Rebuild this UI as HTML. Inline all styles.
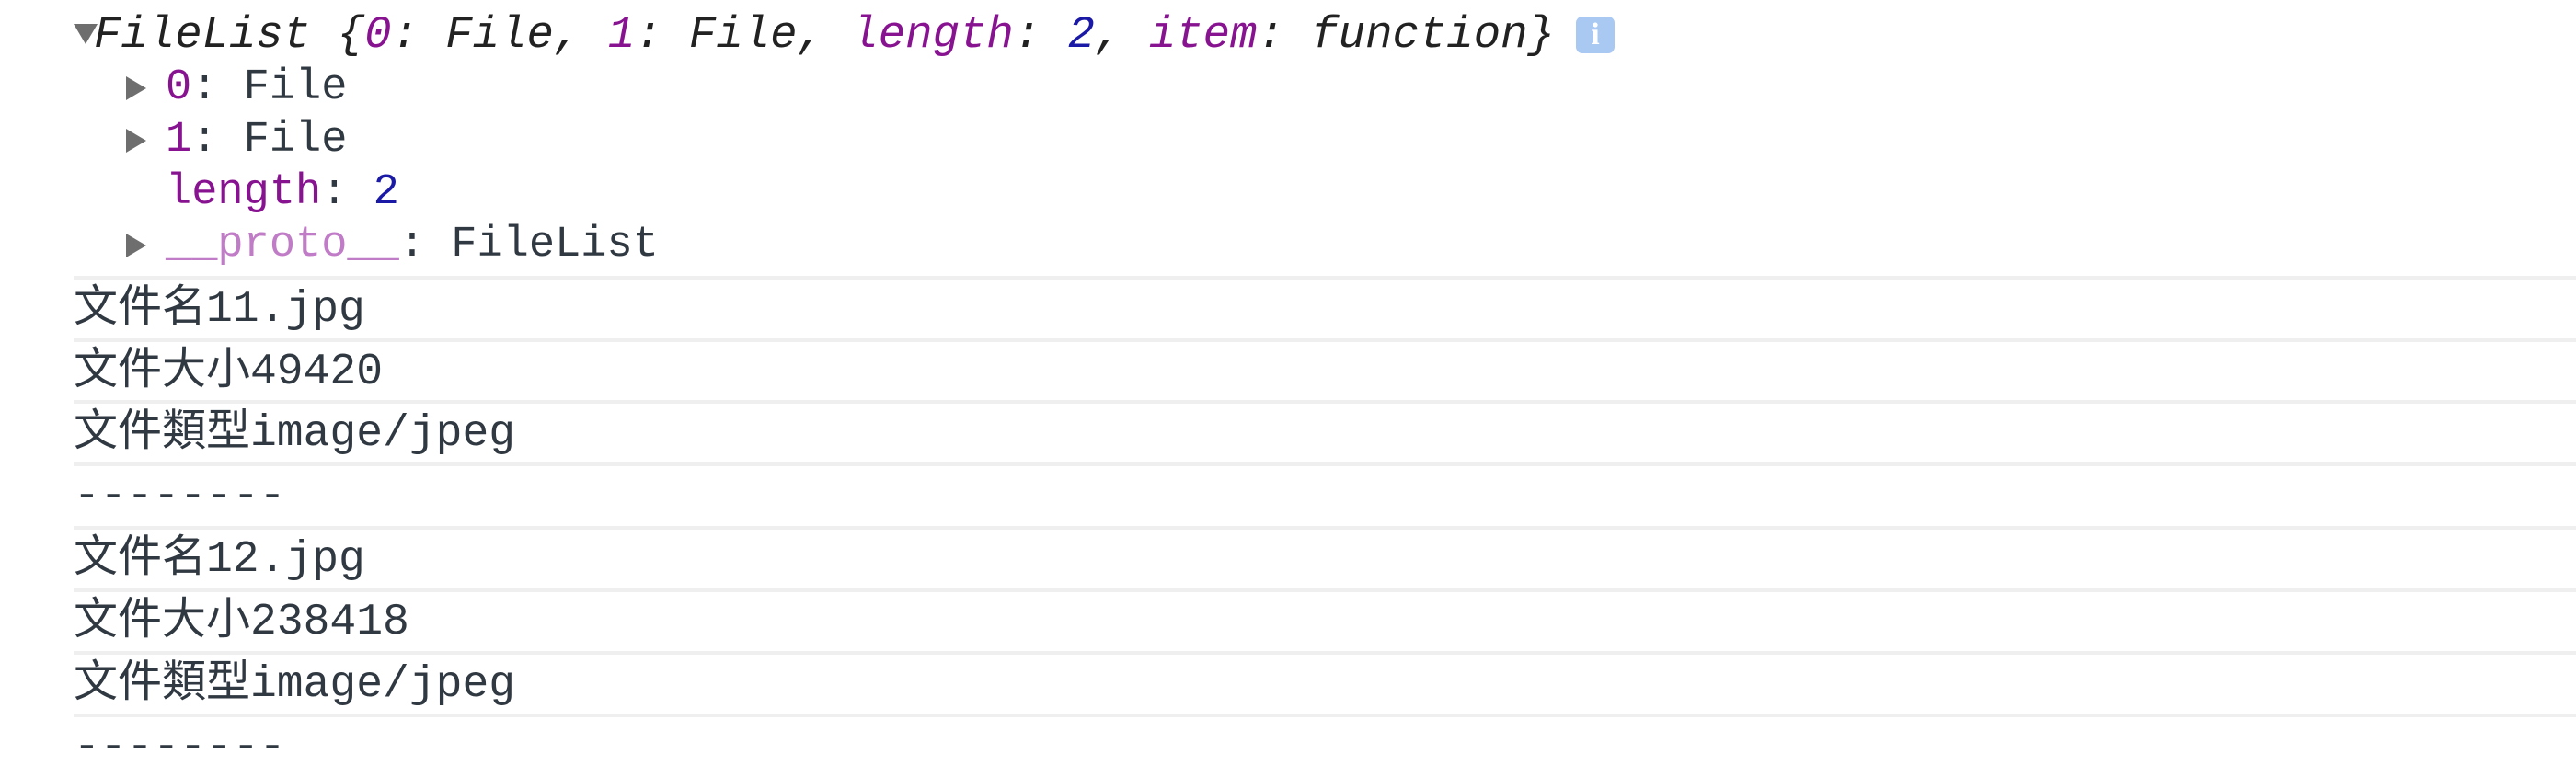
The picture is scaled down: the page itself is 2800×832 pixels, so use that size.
<!DOCTYPE html>
<html><head><meta charset="utf-8"><style>
html,body{margin:0;padding:0;background:#fff;width:2800px;height:832px;overflow:hidden}
body{font-family:"Liberation Mono","Noto Sans CJK SC",monospace;font-size:47px;color:#303942;position:relative}
.r{position:absolute;white-space:pre;line-height:56px}
.k{color:#881391}.n{color:#1a1aa6}.p{color:#c07cc6}
.tri{position:absolute;width:0;height:0}
.down{border-left:13px solid transparent;border-right:13px solid transparent;border-top:22px solid #6e6e6e}
.right{border-top:13px solid transparent;border-bottom:13px solid transparent;border-left:22px solid #6e6e6e}
.sep{position:absolute;left:80px;right:0;height:4px;background:#efefef}
.row{position:absolute;left:80px;line-height:64px;white-space:pre;color:#303942;font-size:48px}
.info{position:absolute;left:1713px;top:18px;width:42px;height:40px;background:#a9c8f2;border-radius:7px;color:#fff;font:bold 34px "Liberation Serif",serif;text-align:center;line-height:40px}
</style></head><body>
<div class="tri down" style="left:80px;top:26px"></div>
<div class="r" style="left:102px;top:10px;font-style:italic;color:#222;font-size:49px">FileList {<span class="k">0</span>: File, <span class="k">1</span>: File, <span class="k">length</span>: <span class="n">2</span>, <span class="k">item</span>: function}</div>
<div class="info">i</div>
<div class="tri right" style="left:137px;top:83px"></div>
<div class="r" style="left:180px;top:68px"><span class="k">0</span>: File</div>
<div class="tri right" style="left:137px;top:140px"></div>
<div class="r" style="left:180px;top:125px"><span class="k">1</span>: File</div>
<div class="r" style="left:180px;top:182px"><span class="k">length</span>: <span class="n">2</span></div>
<div class="tri right" style="left:137px;top:254px"></div>
<div class="r" style="left:180px;top:239px"><span class="p">__proto__</span>: FileList</div>

<div class="sep" style="top:300px"></div>
<div class="row" style="top:305px">文件名11.jpg</div>
<div class="sep" style="top:368px"></div>
<div class="row" style="top:373px">文件大小49420</div>
<div class="sep" style="top:435px"></div>
<div class="row" style="top:440px">文件類型image/jpeg</div>
<div class="sep" style="top:503px"></div>
<div class="row" style="top:508px">--------</div>
<div class="sep" style="top:572px"></div>
<div class="row" style="top:577px">文件名12.jpg</div>
<div class="sep" style="top:640px"></div>
<div class="row" style="top:645px">文件大小238418</div>
<div class="sep" style="top:708px"></div>
<div class="row" style="top:713px">文件類型image/jpeg</div>
<div class="sep" style="top:776px"></div>
<div class="row" style="top:781px">--------</div>
</body></html>
